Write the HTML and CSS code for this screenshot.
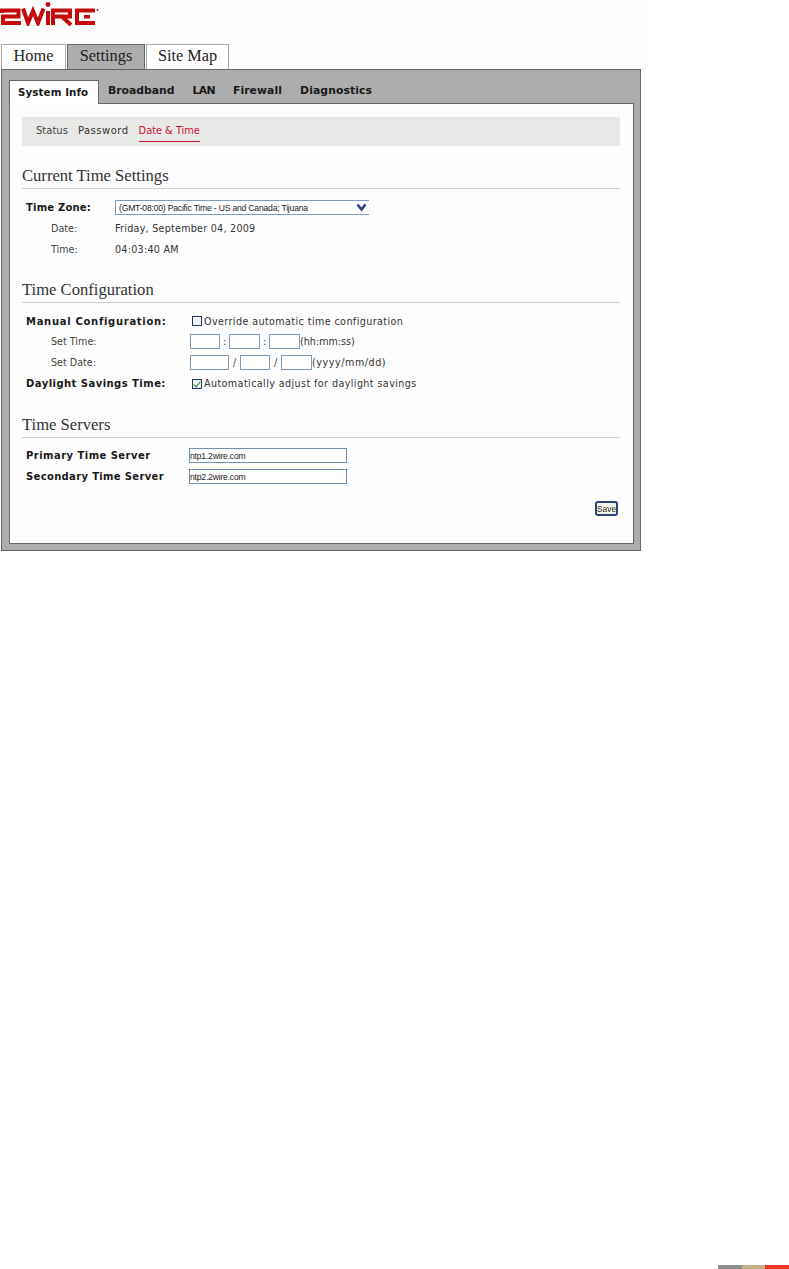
FILE: index.html
```html
<!DOCTYPE html>
<html lang="en">
<head>
<meta charset="utf-8">
<title>2Wire - Date &amp; Time</title>
<link rel="stylesheet" href="styles.css">
</head>
<body>
<div class="page">
  <header class="masthead">
    <svg class="logo" width="100" height="26" viewBox="0 0 100 26" role="img" aria-label="2Wire logo">
      <g fill="none" stroke="#c40a0a" stroke-width="4">
        <path d="M2 13 V10.5 H18.5 V16.5 H3 V23 H21"/>
        <path d="M23 8.5 L28 23 L33 11 L38 23 L43.5 8.5"/>
        <path d="M48 11 V25"/>
        <path d="M53 25 V10.5 H70 V16.5 H55 M62 16.5 L71 25"/>
        <path d="M77 25 V10.5 H95 M77 23 H95"/>
      </g>
      <circle cx="48" cy="4.5" r="2.4" fill="#c40a0a"/>
      <rect x="84" y="15" width="6" height="3.5" fill="#c40a0a"/>
      <circle cx="97.5" cy="10" r="1" fill="#c40a0a"/>
    </svg>
  </header>

  <nav class="main-tabs">
    <a class="main-tab tab-home">Home</a>
    <a class="main-tab tab-settings is-active">Settings</a>
    <a class="main-tab tab-map">Site Map</a>
  </nav>

  <main class="frame">
    <nav class="sub-tabs">
      <a class="sub-tab is-active">System Info</a>
      <a class="sub-tab">Broadband</a>
      <a class="sub-tab sub-tab-tight">LAN</a>
      <a class="sub-tab sub-tab-loose">Firewall</a>
      <a class="sub-tab sub-tab-loose">Diagnostics</a>
    </nav>

    <div class="content">
      <nav class="crumbs">
        <a class="crumb">Status</a>
        <a class="crumb crumb-wide">Password</a>
        <a class="crumb is-active">Date &amp; Time</a>
      </nav>

      <section class="section section-first">
        <h2 class="heading">Current Time Settings</h2>
        <div class="rows rows-tz">
          <div class="row">
            <span class="label">Time Zone:</span>
            <div class="select-wrap">
              <select class="select">
                <option>(GMT-08:00) Pacific Time - US and Canada; Tijuana</option>
              </select>
              <svg class="select-arrow" width="11" height="9" viewBox="0 0 11 9"><path d="M1.5 1.5 L5.5 6.5 L9.5 1.5" fill="none" stroke="#2b3f8c" stroke-width="2.6"/></svg>
            </div>
          </div>
          <div class="row"><span class="sublabel">Date:</span><span class="value">Friday, September 04, 2009</span></div>
          <div class="row"><span class="sublabel">Time:</span><span class="value">04:03:40 AM</span></div>
        </div>
      </section>

      <section class="section section-config">
        <h2 class="heading">Time Configuration</h2>
        <div class="rows rows-config">
          <div class="row">
            <span class="label label-wide">Manual Configuration:</span>
            <label class="check"><input class="checkbox" type="checkbox"><span>Override automatic time configuration</span></label>
          </div>
          <div class="row">
            <span class="sublabel">Set Time:</span>
            <div class="fields">
              <input class="field w30"><span class="sep">:</span><input class="field w31"><span class="sep">:</span><input class="field w31"><span class="hint">(hh:mm:ss)</span>
            </div>
          </div>
          <div class="row">
            <span class="sublabel">Set Date:</span>
            <div class="fields">
              <input class="field w39"><span class="sep sep-wide">/</span><input class="field w30"><span class="sep sep-wide">/</span><input class="field w31"><span class="hint hint-wide">(yyyy/mm/dd)</span>
            </div>
          </div>
          <div class="row">
            <span class="label label-mid">Daylight Savings Time:</span>
            <label class="check"><input class="checkbox" type="checkbox" checked><span>Automatically adjust for daylight savings</span></label>
          </div>
        </div>
      </section>

      <section class="section section-servers">
        <h2 class="heading">Time Servers</h2>
        <div class="rows rows-servers">
          <div class="row"><span class="label label-mid">Primary Time Server</span><input class="server" value="ntp1.2wire.com"></div>
          <div class="row"><span class="label label-snug">Secondary Time Server</span><input class="server" value="ntp2.2wire.com"></div>
        </div>
      </section>

      <div class="actions"><button class="save" type="button">Save</button></div>
    </div>
  </main>
  <div class="corner-bar"><span class="bar-grey"></span><span class="bar-tan"></span><span class="bar-red"></span></div>
</div>
</body>
</html>
```

FILE: styles.css
```css
* { box-sizing: border-box; }
html, body { margin: 0; padding: 0; background: #fff; }
.page {
  height: 1269px;
  display: flex;
  flex-direction: column;
  font-family: "DejaVu Sans", Verdana, sans-serif;
  color: #222;
  filter: blur(.3px);
}
.masthead { width: 641px; height: 44px; background: #fdfdfd; padding: 0; }
.logo { display: block; }

.main-tabs { display: flex; width: 641px; height: 25px; padding-left: 1px; gap: 1px; background: #fdfdfd; align-items: flex-end; }
.main-tab {
  height: 25px;
  padding-top: 1px;
  text-align: center;
  border: 1px solid #aaa;
  border-bottom: 0;
  background: #fff;
  font: 16.3px/20px "Liberation Serif", "DejaVu Serif", serif;
  color: #222;
}
.tab-home { width: 65px; }
.tab-settings { width: 78px; }
.tab-map { width: 83px; }
.main-tab.is-active { background: #adadad; border: 1px solid #666; border-bottom: 0; }

.frame {
  width: 640px;
  height: 482px;
  margin-left: 1px;
  background: #adadad;
  border: 1px solid #666;
  padding: 10px 6px 6px 7px;
  display: flex;
  flex-direction: column;
}
.sub-tabs { display: flex; height: 23px; align-items: flex-start; }
.sub-tab {
  font-size: 10.8px;
  font-weight: 700;
  line-height: 22px;
  margin-left: 18px;
  color: #1a1a1a;
}
.sub-tab-tight { letter-spacing: -.6px; }
.sub-tab-loose { letter-spacing: .1px; }
.sub-tab.is-active {
  margin-left: 0;
  width: 90px;
  height: 24px;
  padding-left: 8px;
  font-size: 10.3px;
  letter-spacing: .1px;
  line-height: 22px;
  background: #fff;
  border: 1px solid #666;
  border-bottom: 0;
  position: relative;
  z-index: 1;
}
.sub-tab.is-active + .sub-tab { margin-left: 9px; }

.content {
  flex: 1;
  background: #fdfdfd;
  border: 1px solid #666;
  padding: 13px 13px 0 12px;
  display: flex;
  flex-direction: column;
}
.crumbs {
  height: 29px;
  background: #e8e8e6;
  display: flex;
  align-items: center;
  gap: 10px;
  padding-left: 14px;
}
.crumb { font-size: 10px; color: #444; height: 20px; line-height: 18px; }
.crumb-wide { color: #333; letter-spacing: .5px; }
.crumb.is-active { font-size: 9.8px; color: #cc1030; border-bottom: 1px solid #cc1030; }

.heading {
  margin: 0;
  height: 23px;
  font: 400 16.6px/19px "Liberation Serif", "DejaVu Serif", serif;
  color: #333;
  border-bottom: 1px solid #d0d0d0;
}
.section-first { margin-top: 20px; }
.section-config { margin-top: 20px; }
.section-servers { margin-top: 21px; }

.rows { display: grid; grid-auto-rows: 21px; padding-top: 8px; }
.row { display: grid; align-items: center; padding-left: 4px; font-size: 9.6px; }
.rows-tz .row { grid-template-columns: 89px 1fr; }
.rows-config { grid-template-rows: 20px 21px 21px 21px; }
.rows-config .row { grid-template-columns: 164px 1fr; }
.rows-servers { padding-top: 7px; }
.rows-servers .row { grid-template-columns: 163px 1fr; }

.label { font-weight: 700; font-size: 10px; color: #1a1a1a; letter-spacing: .2px; }
.label-wide { letter-spacing: .7px; }
.label-mid { letter-spacing: .46px; }
.label-snug { letter-spacing: .34px; }
.sublabel { padding-left: 25px; color: #444; }
.value { color: #333; letter-spacing: .25px; }

.select-wrap { position: relative; width: 254px; height: 15px; }
.select {
  appearance: none;
  display: block;
  width: 100%;
  height: 100%;
  border: 0;
  border-top: 1px solid #7f9db9;
  border-bottom: 1px solid #7f9db9;
  border-left: 1px solid #7f9db9;
  background: #fff;
  padding: 0 0 0 3px;
  font: 8.6px "Liberation Sans", Arial, sans-serif;
  letter-spacing: -.2px;
  color: #222;
  border-radius: 0;
}
.select-arrow { position: absolute; right: 2px; top: 3px; }

.check { display: flex; align-items: center; gap: 2px; color: #333; letter-spacing: .4px; }
.checkbox {
  appearance: none;
  width: 10px;
  height: 10px;
  margin: 0 0 0 2px;
  border: 1px solid #1c3a70;
  background: #f4f4f0;
  position: relative;
  flex: none;
}
.checkbox:checked::after {
  content: "";
  position: absolute;
  left: 2px;
  top: 0;
  width: 3px;
  height: 6px;
  border: solid #2a8a2a;
  border-width: 0 1.5px 1.5px 0;
  transform: rotate(40deg);
}

.fields { display: flex; align-items: center; height: 15px; }
.field { height: 15px; border: 1px solid #7f9db9; background: #fff; padding: 0; border-radius: 0; }
.w30 { width: 30px; }
.w31 { width: 31px; }
.w39 { width: 39px; }
.sep { width: 9px; text-align: center; color: #444; }
.sep-wide { width: 11px; }
.hint { color: #333; font-size: 9.6px; }
.hint-wide { letter-spacing: .55px; }

.server {
  width: 158px;
  height: 15px;
  border: 1px solid #6f8fb0;
  background: #fff;
  padding: 0;
  font: 8.6px "Liberation Sans", Arial, sans-serif;
  color: #222;
  border-radius: 0;
  letter-spacing: -.2px;
}

.actions { display: flex; justify-content: flex-end; margin-top: 14px; padding-right: 2px; }
.save {
  width: 23px;
  height: 15px;
  padding: 0;
  border: 2px solid #2b4478;
  border-radius: 3px;
  background: #f6f4ea;
  font: 8.4px "Liberation Sans", Arial, sans-serif;
  color: #222;
}

.corner-bar { display: flex; height: 4px; margin-top: auto; align-self: flex-end; }
.bar-grey { width: 24px; background: #8f8f91; }
.bar-tan { width: 23px; background: #c4b086; }
.bar-red { width: 24px; background: #ee3524; }
```
